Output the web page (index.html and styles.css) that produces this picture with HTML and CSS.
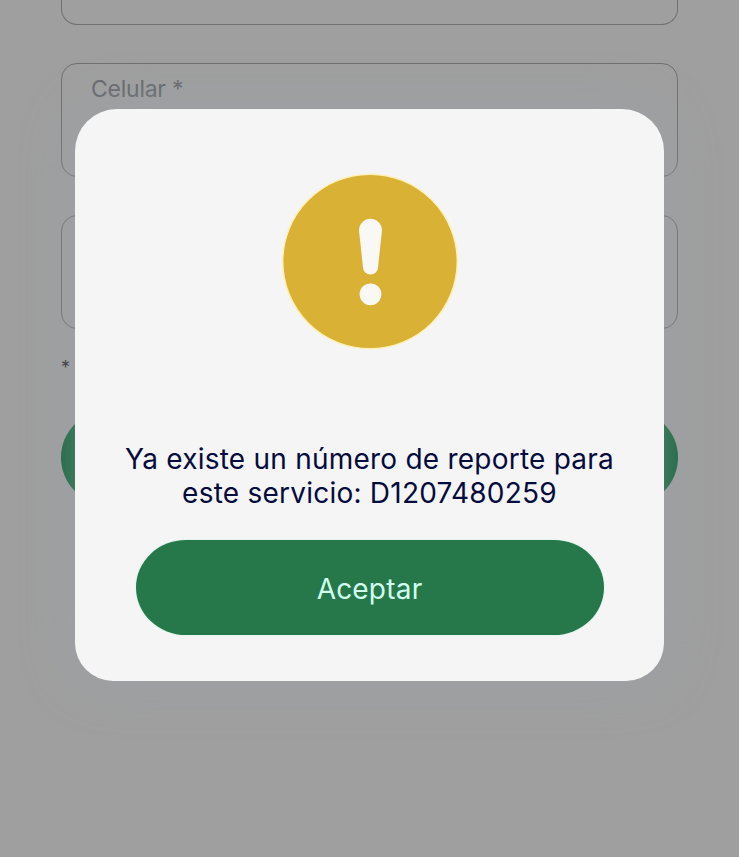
FILE: index.html
```html
<!DOCTYPE html>
<html lang="es">
<head>
<meta charset="utf-8">
<title>Reporte de servicio</title>
<link rel="stylesheet" href="styles.css">
</head>
<body>
<main class="form">
  <div class="field field-first"></div>
  <div class="field"><span class="label">Celular *</span></div>
  <div class="field"></div>
  <p class="note">*</p>
  <div class="submit"></div>
</main>
<div class="overlay">
  <section class="dialog" role="alertdialog">
    <svg class="icon" viewBox="0 0 178 178">
      <circle cx="89" cy="88.5" r="87.3" fill="#d9b135" stroke="#fff0b8" stroke-width="1.5"/>
      <path d="M78 57.500A11.500 11.800 0 1 1 101 57.500L97 94.500A7.500 7 0 0 1 82 94.500Z" fill="#f9f8f4"/>
      <circle cx="89.500" cy="121.300" r="10.900" fill="#f9f8f4"/>
    </svg>
    <p class="message">Ya existe un número de reporte para<br>este servicio: D1207480259</p>
    <button class="accept">Aceptar</button>
  </section>
</div>
</body>
</html>
```
FILE: styles.css
```css
* { box-sizing: border-box; }
body {
  margin: 0;
  height: 857px;
  overflow: hidden;
  background: #9f9f9f;
  font-family: Inter, "Liberation Sans", sans-serif;
}
.form {
  padding: 0 61px;
}
.field {
  height: 114px;
  margin-bottom: 38px;
  padding: 12px 29px;
  border: 1px solid #707072;
  border-radius: 16px;
}
.field-first {
  height: 25px;
  border-top: 0;
  border-radius: 0 0 16px 16px;
}
.label {
  display: block;
  font-size: 23px;
  line-height: 27px;
  letter-spacing: -0.25px;
  color: #68696c;
}
.note {
  margin: -11px 0 0;
  height: 54px;
  font-size: 18px;
  line-height: 24px;
  color: #2d2e33;
}
.submit {
  height: 95px;
  border-radius: 48px;
  background: #16653a;
}
.overlay {
  position: absolute;
  inset: 0;
  padding: 109px 75px 0;
}
.dialog {
  display: flex;
  flex-direction: column;
  align-items: center;
  height: 572px;
  padding-top: 64px;
  border-radius: 42px 42px 38px 38px;
  background: #f5f5f6;
  box-shadow: 0 0 48px rgba(155, 161, 173, 0.6);
}
.icon {
  display: block;
  width: 178px;
  height: 178px;
}
.message {
  margin: 91px 0 0;
  text-align: center;
  white-space: nowrap;
  font-size: 28px;
  line-height: 34px;
  letter-spacing: 0.23px;
  color: #050b3c;
}
.accept {
  width: 468px;
  height: 95px;
  margin-top: 30px;
  padding: 2px 0 0;
  border: 0;
  border-radius: 50px / 47.5px;
  background: #26784a;
  box-shadow: 0 0 2px #c2f5dc;
  font: 28px/34px Inter, "Liberation Sans", sans-serif;
  letter-spacing: 0.2px;
  color: #d0ffef;
}
```
